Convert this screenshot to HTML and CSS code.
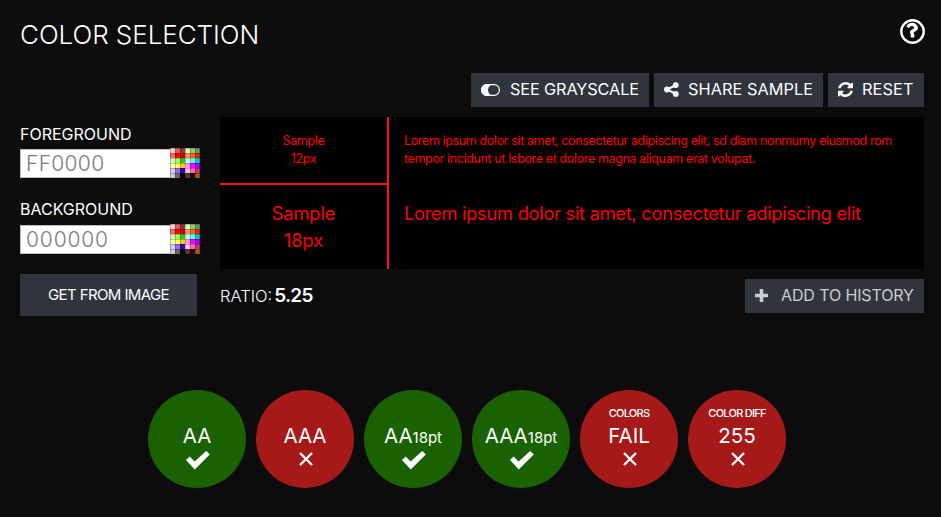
FILE: index.html
```
<!DOCTYPE html>
<html lang="en">
<head>
<meta charset="utf-8">
<title>Color Selection</title>
<link rel="stylesheet" href="styles.css">
</head>
<body>
<svg class="defs" width="0" height="0" aria-hidden="true">
  <symbol id="swatch" viewBox="0 0 30 30">
    <path fill="#fcc" d="M0 0h5v5H0z"/><path fill="#c66" d="M5 0h5v5H5z"/><path fill="#933" d="M10 0h5v5h-5z"/><path fill="#cfc" d="M15 0h5v5h-5z"/><path fill="#9c6" d="M20 0h5v5h-5z"/><path fill="#696" d="M25 0h5v5h-5z"/>
    <path fill="#f66" d="M0 5h5v5H0z"/><path fill="#f00" d="M5 5h5v5H5z"/><path fill="#c00" d="M10 5h5v5h-5z"/><path fill="#f96" d="M15 5h5v5h-5z"/><path fill="#f60" d="M20 5h5v5h-5z"/><path fill="#c30" d="M25 5h5v5h-5z"/>
    <path fill="#cfc" d="M0 10h5v5H0z"/><path fill="#9f6" d="M5 10h5v5H5z"/><path fill="#3c0" d="M10 10h5v5h-5z"/><path fill="#cff" d="M15 10h5v5h-5z"/><path fill="#6ff" d="M20 10h5v5h-5z"/><path fill="#0cc" d="M25 10h5v5h-5z"/>
    <path fill="#ff9" d="M0 15h5v5H0z"/><path fill="#ff6" d="M5 15h5v5H5z"/><path fill="#fc0" d="M10 15h5v5h-5z"/><path fill="#f9f" d="M15 15h5v5h-5z"/><path fill="#f0f" d="M20 15h5v5h-5z"/><path fill="#90f" d="M25 15h5v5h-5z"/>
    <path fill="#ccf" d="M0 20h5v5H0z"/><path fill="#96f" d="M5 20h5v5H5z"/><path fill="#30c" d="M10 20h5v5h-5z"/><path fill="#fcc" d="M15 20h5v5h-5z"/><path fill="#f6c" d="M20 20h5v5h-5z"/><path fill="#c36" d="M25 20h5v5h-5z"/>
    <path fill="#ccc" d="M0 25h5v5H0z"/><path fill="#666" d="M5 25h5v5H5z"/><path fill="#000" d="M10 25h5v5h-5z"/><path fill="#633" d="M15 25h5v5h-5z"/><path fill="#300" d="M20 25h5v5h-5z"/><path fill="#960" d="M25 25h5v5h-5z"/>
    <path stroke="#000" stroke-opacity=".22" fill="none" d="M0 .5h30M0 5.5h30M0 10.5h30M0 15.5h30M0 20.5h30M0 25.5h30M.5 0v30M5.5 0v30M10.5 0v30M15.5 0v30M20.5 0v30M25.5 0v30M29.5 0v30"/>
  </symbol>
  <symbol id="check" viewBox="0 0 24 19"><path fill="#fff" d="M0 9 3.6 5.4 8.6 10.6 20.2 0 23.8 3.4 8.7 18.5z"/></symbol>
  <symbol id="cross" viewBox="0 0 14 14"><path stroke="#fff" stroke-width="2.4" fill="none" d="M1 1l12 12M13 1 1 13"/></symbol>
</svg>
<main class="page">
  <header class="head">
    <h1>COLOR SELECTION</h1>
    <svg class="help" viewBox="0 128 1536 1536"><circle cx="768" cy="896" r="690" fill="none" stroke="#fff" stroke-width="145"/><path fill="#fff" d="M880 1072v160q0 14-9 23t-23 9h-160q-14 0-23-9t-9-23v-160q0-14 9-23t23-9h160q14 0 23 9t9 23zm216-408q0 50-15 90t-45.5 69-52 44-59.5 36q-32 18-46.5 28t-26 24-11.5 29v32q0 14-9 23t-23 9h-160q-14 0-23-9t-9-23v-68q0-35 10.5-64.5t24-47.5 39-35.5 41-25.5 44.5-21q53-25 75-43t22-49q0-42-43.5-71.5t-95.5-29.5q-56 0-95 27-29 20-80 83-9 12-25 12-11 0-19-6l-108-82q-10-7-12-20t5-23q122-192 349-192 129 0 238.5 89.5t109.5 214.5z"/></svg>
  </header>
  <nav class="tools">
    <button class="btn gray"><svg width="19" height="12" viewBox="0 0 19 12"><rect x=".6" y=".6" width="17.8" height="10.8" rx="5.4" fill="none" stroke="#fff" stroke-width="1.2"/><path fill="#fff" d="M6 0h7a6 6 0 0 0 0 12H6A6 6 0 0 1 6 0z"/></svg><span>SEE GRAYSCALE</span></button>
    <button class="btn share"><svg width="15" height="15" viewBox="0 0 15 15"><path d="M12 3 3 7.500 12 12" fill="none" stroke="#fff" stroke-width="2"/><g fill="#fff"><circle cx="11.800" cy="3.100" r="2.900"/><circle cx="3" cy="7.500" r="2.900"/><circle cx="11.800" cy="11.900" r="2.900"/></g></svg><span>SHARE SAMPLE</span></button>
    <button class="btn reset"><svg width="15" height="15" viewBox="0 128 1536 1536"><path fill="#fff" d="M1511 1056q0 5-1 7-64 268-268 434.500t-478 166.500q-146 0-282.500-55t-243.500-157l-129 129q-19 19-45 19t-45-19-19-45v-448q0-26 19-45t45-19h448q26 0 45 19t19 45-19 45l-137 137q71 66 161 102t187 36q134 0 250-65t186-179q11-17 53-117 8-23 30-23h192q13 0 22.500 9.500t9.500 22.500zm25-800v448q0 26-19 45t-45 19h-448q-26 0-45-19t-19-45 19-45l138-138q-148-137-349-137-134 0-250 65t-186 179q-11 17-53 117-8 23-30 23h-199q-13 0-22.500-9.500t-9.500-22.500v-7q65-268 270-434.500t480-166.500q146 0 284 55.500t245 156.500l130-129q19-19 45-19t45 19 19 45z"/></svg><span>RESET</span></button>
  </nav>
  <div class="work">
    <section class="pickers">
      <label class="field-label">FOREGROUND</label>
      <div class="field"><div class="value">FF0000</div><svg class="swatch"><use href="#swatch"/></svg></div>
      <label class="field-label second">BACKGROUND</label>
      <div class="field"><div class="value zeros">000000</div><svg class="swatch"><use href="#swatch"/></svg></div>
      <button class="from-image">GET FROM IMAGE</button>
    </section>
    <section class="preview">
      <div class="sample">
        <div class="labels">
          <div class="small-label">Sample<br>12px</div>
          <div class="large-label">Sample<br>18px</div>
        </div>
        <div class="copy">
          <p class="small-copy">Lorem ipsum dolor sit amet, consectetur adipiscing elit, sd diam nonmumy eiusmod rom<br>tempor incidunt ut lsbore et dolore magna aliquam erat volupat.</p>
          <p class="large-copy">Lorem ipsum dolor sit amet, consectetur adipiscing elit</p>
        </div>
      </div>
      <div class="summary">
        <div class="ratio"><span>RATIO:</span><b>5.25</b></div>
        <button class="btn add"><svg width="13" height="13" viewBox="0 0 13 13"><path stroke="#ccc" stroke-width="3.600" stroke-linejoin="round" d="M6.500 0v13M0 6.500h13"/></svg><span>ADD TO HISTORY</span></button>
      </div>
    </section>
  </div>
  <section class="results">
    <div class="result pass"><small></small><div class="grade">AA</div><svg class="check"><use href="#check"/></svg></div>
    <div class="result fail"><small></small><div class="grade">AAA</div><svg class="cross"><use href="#cross"/></svg></div>
    <div class="result pass"><small></small><div class="grade">AA<i>18pt</i></div><svg class="check"><use href="#check"/></svg></div>
    <div class="result pass"><small></small><div class="grade">AAA<i>18pt</i></div><svg class="check"><use href="#check"/></svg></div>
    <div class="result fail"><small>COLORS</small><div class="grade">FAIL</div><svg class="cross"><use href="#cross"/></svg></div>
    <div class="result fail"><small>COLOR DIFF</small><div class="grade">255</div><svg class="cross"><use href="#cross"/></svg></div>
  </section>
</main>
</body>
</html>
```
FILE: styles.css
```
* { box-sizing: border-box; }
body { margin: 0; background: #0c0c0c; color: #fff; font-family: Inter, "Liberation Sans", sans-serif; overflow: hidden; }
svg { display: block; flex: none; }
.defs { position: absolute; }
button { border: 0; margin: 0; font: inherit; color: #fff; background: #30353d; white-space: nowrap; }
.page { width: 941px; height: 517px; padding: 0 17px 0 20px; }
.head { height: 73px; display: flex; justify-content: space-between; }
h1 { margin: 19px 0 0; font-size: 26px; line-height: 32px; font-weight: 330; letter-spacing: -.05px; }
.help { width: 25px; height: 25px; margin: 18.5px -.5px 0 0; }
.tools { display: flex; justify-content: flex-end; gap: 5px; height: 34px; }
.btn { display: flex; align-items: center; height: 34px; padding: 0 0 1px 10px; font-size: 16.3px; line-height: 20px; }
.btn span { margin-top: -2px; }
.gray { width: 178px; gap: 10px; letter-spacing: -.13px; }
.share { width: 169px; gap: 9px; letter-spacing: .05px; }
.reset { width: 96px; gap: 9px; letter-spacing: .1px; }
.work { display: flex; margin-top: 10px; }
.pickers { width: 200px; padding-top: 7px; }
.field-label { display: block; height: 24px; font-size: 16px; line-height: 20px; }
.second { height: 25px; margin-top: 21px; }
.field { display: flex; align-items: flex-end; height: 30px; }
.value { width: 150px; height: 29px; padding-left: 5px; border: 1px solid #bbb; border-right: 0; background: #fff; color: #7c7c7c; font-size: 21px; line-height: 27px; font-weight: 330; letter-spacing: .3px; }
.zeros { letter-spacing: .85px; }
.swatch { width: 30px; height: 30px; }
.from-image { display: block; width: 177px; height: 42px; margin-top: 20px; padding: 0 0 1px; font-size: 15px; letter-spacing: -.6px; }
.preview { width: 704px; }
.sample { display: flex; height: 152px; background: #000; color: #f00; }
.labels { width: 169px; border-right: 2px solid #ff1111; text-align: center; }
.small-label { height: 68px; padding-top: 15px; border-bottom: 2px solid #ff1111; font-size: 12.5px; line-height: 18px; letter-spacing: -.3px; }
.large-label { padding-top: 15px; font-size: 18.3px; line-height: 27px; letter-spacing: -.1px; }
.copy { padding-left: 15px; white-space: nowrap; }
.copy p { margin: 0; }
.small-copy { padding-top: 15px; font-size: 12.5px; line-height: 18px; letter-spacing: -.365px; }
.copy .large-copy { margin-top: 32px; font-size: 18.3px; line-height: 27px; letter-spacing: -.275px; }
.summary { display: flex; justify-content: space-between; margin-top: 10px; }
.ratio { display: flex; align-items: baseline; gap: 2px; padding-top: 6px; font-size: 16.500px; line-height: 22px; font-weight: 300; }
.ratio b { font-size: 19px; font-weight: 600; letter-spacing: -.7px; }
.add { width: 179px; gap: 13px; color: #ccc; font-size: 16px; letter-spacing: -.12px; }
.results { display: flex; gap: 10px; margin: 74px 0 0 128px; }
.result { width: 98px; height: 98px; border-radius: 50%; display: flex; flex-direction: column; align-items: center; }
.pass { background: #1a6100; }
.fail { background: #a51a19; }
.result small { height: 14px; margin-top: 16px; font-size: 11px; line-height: 14px; font-weight: 500; letter-spacing: -.75px; }
.grade { height: 26px; margin-top: 3px; font-size: 20.500px; line-height: 26px; white-space: nowrap; }
.grade i { font-style: normal; font-size: 15px; }
.check { width: 24px; height: 19px; margin: 2px 0 0 1px; }
.cross { width: 14px; height: 14px; margin: 3px 0 0 1px; }
```
